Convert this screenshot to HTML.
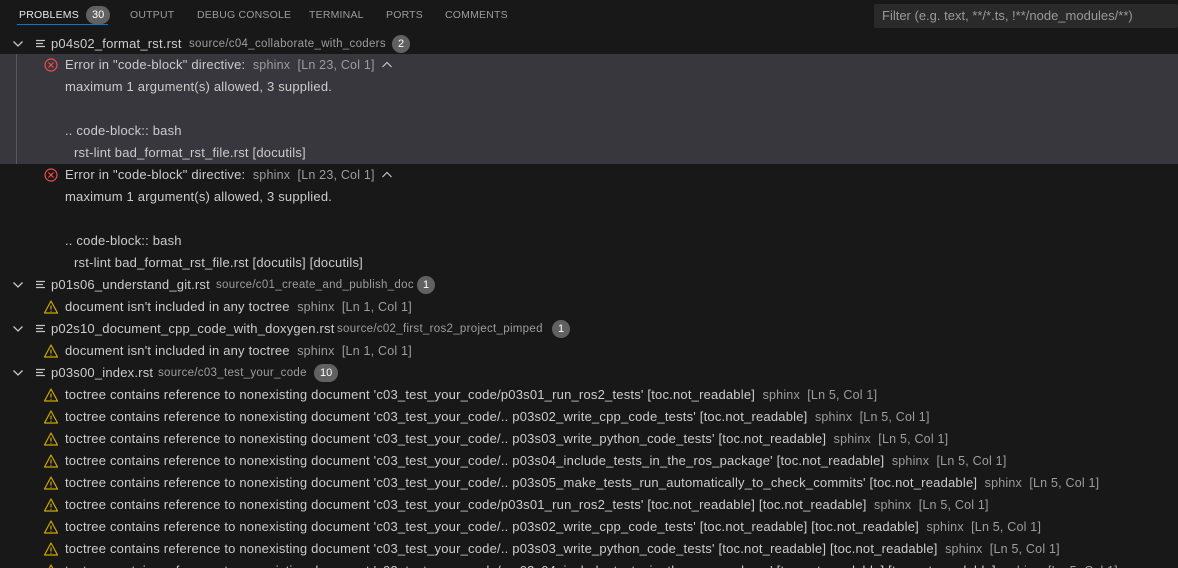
<!DOCTYPE html>
<html><head><meta charset="utf-8"><style>
*{margin:0;padding:0;box-sizing:border-box}
html,body{width:1178px;height:568px;overflow:hidden}
body{background:#181818;color:#cccccc;font-family:"Liberation Sans","DejaVu Sans",sans-serif;font-size:13px;letter-spacing:0.2px;position:relative}
.tabs{position:absolute;top:0;left:0;height:30px;width:100%}
.tab{position:absolute;top:9px;font-size:10.5px;color:#9d9d9d;letter-spacing:0.2px}
.tab.act{color:#e7e7e7}
.badge{display:inline-block;background:#616161;color:#fff;border-radius:10px;font-size:11px;height:18px;line-height:18px;padding:0 6px;text-align:center;min-width:18px;letter-spacing:0}
.ul{position:absolute;left:17px;top:24px;width:91px;height:1px;background:#0078d4}
.filter{position:absolute;left:874px;top:4px;width:304px;height:24px;background:#2a2a2a;border-radius:2px;color:#9a9a9a;font-size:13px;line-height:24px;padding-left:8px;letter-spacing:0}
.row{position:absolute;left:0;width:100%;height:22px;line-height:22px;white-space:nowrap}
.hl{position:absolute;left:0;top:54px;width:100%;height:110px;background:#37373d}
.guide{position:absolute;left:16px;top:54px;width:1px;height:110px;background:#585858}
.dim{color:#9d9d9d;font-size:12.5px}
.src{color:#9d9d9d;font-size:11.5px;letter-spacing:0.3px}
.chev{position:absolute;left:12px;top:6px}
.file{position:absolute;left:36px;top:6px}
.ic{position:absolute;left:43px;top:3px}
</style></head><body>
<div class="tabs">
<span class="tab act" style="left:19px">PROBLEMS</span>
<span class="badge" style="position:absolute;left:86px;top:6px">30</span>
<span class="tab" style="left:130px">OUTPUT</span>
<span class="tab" style="left:197px">DEBUG CONSOLE</span>
<span class="tab" style="left:309px">TERMINAL</span>
<span class="tab" style="left:386px">PORTS</span>
<span class="tab" style="left:445px">COMMENTS</span>
<div class="ul"></div>
<div class="filter">Filter (e.g. text, **/*.ts, !**/node_modules/**)</div>
</div>
<div class="hl"></div><div class="guide"></div>

<div class="row" style="top:33px"><svg class="chev" width="12" height="10"><path d="M1.5 2.5 L6 7 L10.5 2.5" stroke="#c5c5c5" stroke-width="1.3" fill="none"/></svg><svg class="file" width="10" height="10"><path d="M0 1.5H9M0 4.5H7M0 7.5H9" stroke="#c5c5c5" stroke-width="1.2"/></svg><span style="position:absolute;left:51px">p04s02_format_rst.rst</span><span class="src" style="position:absolute;left:189px">source/c04_collaborate_with_coders</span><span class="badge" style="position:absolute;left:392px;top:2px">2</span></div>

<div class="row" style="top:54px"><svg class="ic" width="16" height="16"><circle cx="8" cy="8" r="6" stroke="#f14c4c" stroke-width="1.2" fill="none"/><path d="M5.5 5.5L10.5 10.5M10.5 5.5L5.5 10.5" stroke="#f14c4c" stroke-width="1.2"/></svg><span style="position:absolute;left:65px">Error in "code-block" directive: <span class="dim">&nbsp;sphinx&nbsp; [Ln 23, Col 1]</span></span><svg style="position:absolute;left:381px;top:7px" width="12" height="8"><path d="M1.5 6L6 1.5L10.5 6" stroke="#c5c5c5" stroke-width="1.2" fill="none"/></svg></div>
<div class="row" style="top:76px"><span style="position:absolute;left:65px">maximum 1 argument(s) allowed, 3 supplied.</span></div>
<div class="row" style="top:120px"><span style="position:absolute;left:65px">.. code-block:: bash</span></div>
<div class="row" style="top:142px"><span style="position:absolute;left:74px">rst-lint bad_format_rst_file.rst [docutils]</span></div>

<div class="row" style="top:164px"><svg class="ic" width="16" height="16"><circle cx="8" cy="8" r="6" stroke="#f14c4c" stroke-width="1.2" fill="none"/><path d="M5.5 5.5L10.5 10.5M10.5 5.5L5.5 10.5" stroke="#f14c4c" stroke-width="1.2"/></svg><span style="position:absolute;left:65px">Error in "code-block" directive: <span class="dim">&nbsp;sphinx&nbsp; [Ln 23, Col 1]</span></span><svg style="position:absolute;left:381px;top:7px" width="12" height="8"><path d="M1.5 6L6 1.5L10.5 6" stroke="#c5c5c5" stroke-width="1.2" fill="none"/></svg></div>
<div class="row" style="top:186px"><span style="position:absolute;left:65px">maximum 1 argument(s) allowed, 3 supplied.</span></div>
<div class="row" style="top:230px"><span style="position:absolute;left:65px">.. code-block:: bash</span></div>
<div class="row" style="top:252px"><span style="position:absolute;left:74px">rst-lint bad_format_rst_file.rst [docutils] [docutils]</span></div>

<div class="row" style="top:274px"><svg class="chev" width="12" height="10"><path d="M1.5 2.5 L6 7 L10.5 2.5" stroke="#c5c5c5" stroke-width="1.3" fill="none"/></svg><svg class="file" width="10" height="10"><path d="M0 1.5H9M0 4.5H7M0 7.5H9" stroke="#c5c5c5" stroke-width="1.2"/></svg><span style="position:absolute;left:51px">p01s06_understand_git.rst</span><span class="src" style="position:absolute;left:216px">source/c01_create_and_publish_doc</span><span class="badge" style="position:absolute;left:417px;top:2px">1</span></div>
<div class="row" style="top:296px"><svg class="ic" width="16" height="16"><path d="M8 2L14.5 14H1.5Z" stroke="#cca700" stroke-width="1.2" fill="none" stroke-linejoin="round"/><path d="M8 6.5V10.5M8 11.8V12.8" stroke="#cca700" stroke-width="1.2"/></svg><span style="position:absolute;left:65px">document isn't included in any toctree <span class="dim">&nbsp;sphinx&nbsp; [Ln 1, Col 1]</span></span></div>

<div class="row" style="top:318px"><svg class="chev" width="12" height="10"><path d="M1.5 2.5 L6 7 L10.5 2.5" stroke="#c5c5c5" stroke-width="1.3" fill="none"/></svg><svg class="file" width="10" height="10"><path d="M0 1.5H9M0 4.5H7M0 7.5H9" stroke="#c5c5c5" stroke-width="1.2"/></svg><span style="position:absolute;left:51px">p02s10_document_cpp_code_with_doxygen.rst</span><span class="src" style="position:absolute;left:337px">source/c02_first_ros2_project_pimped</span><span class="badge" style="position:absolute;left:552px;top:2px">1</span></div>
<div class="row" style="top:340px"><svg class="ic" width="16" height="16"><path d="M8 2L14.5 14H1.5Z" stroke="#cca700" stroke-width="1.2" fill="none" stroke-linejoin="round"/><path d="M8 6.5V10.5M8 11.8V12.8" stroke="#cca700" stroke-width="1.2"/></svg><span style="position:absolute;left:65px">document isn't included in any toctree <span class="dim">&nbsp;sphinx&nbsp; [Ln 1, Col 1]</span></span></div>

<div class="row" style="top:362px"><svg class="chev" width="12" height="10"><path d="M1.5 2.5 L6 7 L10.5 2.5" stroke="#c5c5c5" stroke-width="1.3" fill="none"/></svg><svg class="file" width="10" height="10"><path d="M0 1.5H9M0 4.5H7M0 7.5H9" stroke="#c5c5c5" stroke-width="1.2"/></svg><span style="position:absolute;left:51px">p03s00_index.rst</span><span class="src" style="position:absolute;left:158px">source/c03_test_your_code</span><span class="badge" style="position:absolute;left:314px;top:2px">10</span></div>

<div class="row" style="top:384px"><svg class="ic" width="16" height="16"><path d="M8 2L14.5 14H1.5Z" stroke="#cca700" stroke-width="1.2" fill="none" stroke-linejoin="round"/><path d="M8 6.5V10.5M8 11.8V12.8" stroke="#cca700" stroke-width="1.2"/></svg><span style="position:absolute;left:65px">toctree contains reference to nonexisting document 'c03_test_your_code/p03s01_run_ros2_tests' [toc.not_readable] <span class="dim">&nbsp;sphinx&nbsp; [Ln 5, Col 1]</span></span></div>
<div class="row" style="top:406px"><svg class="ic" width="16" height="16"><path d="M8 2L14.5 14H1.5Z" stroke="#cca700" stroke-width="1.2" fill="none" stroke-linejoin="round"/><path d="M8 6.5V10.5M8 11.8V12.8" stroke="#cca700" stroke-width="1.2"/></svg><span style="position:absolute;left:65px">toctree contains reference to nonexisting document 'c03_test_your_code/.. p03s02_write_cpp_code_tests' [toc.not_readable] <span class="dim">&nbsp;sphinx&nbsp; [Ln 5, Col 1]</span></span></div>
<div class="row" style="top:428px"><svg class="ic" width="16" height="16"><path d="M8 2L14.5 14H1.5Z" stroke="#cca700" stroke-width="1.2" fill="none" stroke-linejoin="round"/><path d="M8 6.5V10.5M8 11.8V12.8" stroke="#cca700" stroke-width="1.2"/></svg><span style="position:absolute;left:65px">toctree contains reference to nonexisting document 'c03_test_your_code/.. p03s03_write_python_code_tests' [toc.not_readable] <span class="dim">&nbsp;sphinx&nbsp; [Ln 5, Col 1]</span></span></div>
<div class="row" style="top:450px"><svg class="ic" width="16" height="16"><path d="M8 2L14.5 14H1.5Z" stroke="#cca700" stroke-width="1.2" fill="none" stroke-linejoin="round"/><path d="M8 6.5V10.5M8 11.8V12.8" stroke="#cca700" stroke-width="1.2"/></svg><span style="position:absolute;left:65px">toctree contains reference to nonexisting document 'c03_test_your_code/.. p03s04_include_tests_in_the_ros_package' [toc.not_readable] <span class="dim">&nbsp;sphinx&nbsp; [Ln 5, Col 1]</span></span></div>
<div class="row" style="top:472px"><svg class="ic" width="16" height="16"><path d="M8 2L14.5 14H1.5Z" stroke="#cca700" stroke-width="1.2" fill="none" stroke-linejoin="round"/><path d="M8 6.5V10.5M8 11.8V12.8" stroke="#cca700" stroke-width="1.2"/></svg><span style="position:absolute;left:65px">toctree contains reference to nonexisting document 'c03_test_your_code/.. p03s05_make_tests_run_automatically_to_check_commits' [toc.not_readable] <span class="dim">&nbsp;sphinx&nbsp; [Ln 5, Col 1]</span></span></div>
<div class="row" style="top:494px"><svg class="ic" width="16" height="16"><path d="M8 2L14.5 14H1.5Z" stroke="#cca700" stroke-width="1.2" fill="none" stroke-linejoin="round"/><path d="M8 6.5V10.5M8 11.8V12.8" stroke="#cca700" stroke-width="1.2"/></svg><span style="position:absolute;left:65px">toctree contains reference to nonexisting document 'c03_test_your_code/p03s01_run_ros2_tests' [toc.not_readable] [toc.not_readable] <span class="dim">&nbsp;sphinx&nbsp; [Ln 5, Col 1]</span></span></div>
<div class="row" style="top:516px"><svg class="ic" width="16" height="16"><path d="M8 2L14.5 14H1.5Z" stroke="#cca700" stroke-width="1.2" fill="none" stroke-linejoin="round"/><path d="M8 6.5V10.5M8 11.8V12.8" stroke="#cca700" stroke-width="1.2"/></svg><span style="position:absolute;left:65px">toctree contains reference to nonexisting document 'c03_test_your_code/.. p03s02_write_cpp_code_tests' [toc.not_readable] [toc.not_readable] <span class="dim">&nbsp;sphinx&nbsp; [Ln 5, Col 1]</span></span></div>
<div class="row" style="top:538px"><svg class="ic" width="16" height="16"><path d="M8 2L14.5 14H1.5Z" stroke="#cca700" stroke-width="1.2" fill="none" stroke-linejoin="round"/><path d="M8 6.5V10.5M8 11.8V12.8" stroke="#cca700" stroke-width="1.2"/></svg><span style="position:absolute;left:65px">toctree contains reference to nonexisting document 'c03_test_your_code/.. p03s03_write_python_code_tests' [toc.not_readable] [toc.not_readable] <span class="dim">&nbsp;sphinx&nbsp; [Ln 5, Col 1]</span></span></div>
<div class="row" style="top:560px"><svg class="ic" width="16" height="16"><path d="M8 2L14.5 14H1.5Z" stroke="#cca700" stroke-width="1.2" fill="none" stroke-linejoin="round"/><path d="M8 6.5V10.5M8 11.8V12.8" stroke="#cca700" stroke-width="1.2"/></svg><span style="position:absolute;left:65px">toctree contains reference to nonexisting document 'c03_test_your_code/.. p03s04_include_tests_in_the_ros_package' [toc.not_readable] [toc.not_readable] <span class="dim">&nbsp;sphinx&nbsp; [Ln 5, Col 1]</span></span></div>
</body></html>
